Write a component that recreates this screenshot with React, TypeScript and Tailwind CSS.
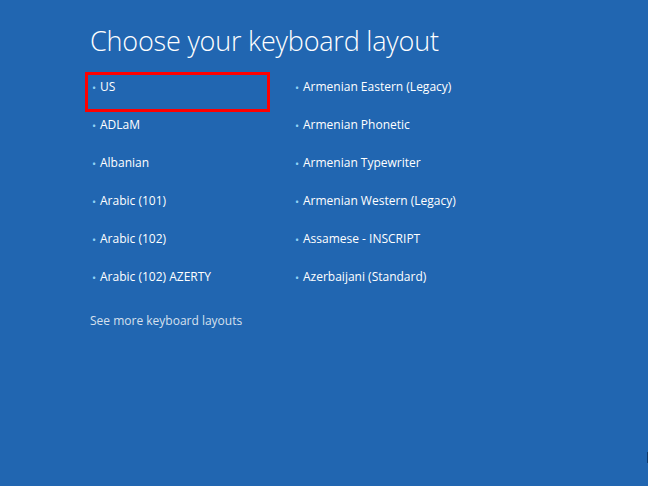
const leftColumn = ['US', 'ADLaM', 'Albanian', 'Arabic (101)', 'Arabic (102)', 'Arabic (102) AZERTY'];
const rightColumn = [
    'Armenian Eastern (Legacy)',
    'Armenian Phonetic',
    'Armenian Typewriter',
    'Armenian Western (Legacy)',
    'Assamese - INSCRIPT',
    'Azerbaijani (Standard)',
];

function LayoutItem({ label, selected }: { label: string; selected?: boolean }) {
    return (
        <div className="relative h-[38px] flex items-center">
            {selected && (
                <div className="absolute left-[-5px] top-[4px] w-[185px] h-[40px] border-[3px] border-[#ff0000]" />
            )}
            <span className="w-[10px] pl-[2px] text-[#8fd3f5] text-[11px] leading-none">•</span>
            <span className="text-[12px] text-white">{label}</span>
        </div>
    );
}

export default function App() {
    return (
        <div
            className="w-[648px] h-[486px] bg-[#2166b1] overflow-hidden relative"
            style={{ fontFamily: '"Open Sans", "Noto Sans", sans-serif' }}
        >
            <div className="pl-[90px] pt-[24px]">
                <h1 className="text-[27px] font-light text-white leading-[34px] tracking-[-0.2px]">
                    Choose your keyboard layout
                </h1>

                {/* ── Layout list ───────────────────── */}
                <div className="flex mt-[10px]">
                    <div className="w-[203px]">
                        {leftColumn.map((l, i) => (
                            <LayoutItem key={l} label={l} selected={i === 0} />
                        ))}
                    </div>
                    <div>
                        {rightColumn.map((l) => (
                            <LayoutItem key={l} label={l} />
                        ))}
                    </div>
                </div>

                <div className="mt-[6px] h-[38px] flex items-center text-[12px] text-[#d6e0ee]">
                    See more keyboard layouts
                </div>
            </div>

            <div className="absolute right-0 top-[452px] w-[1px] h-[11px] bg-[#0d3a6e]" />
        </div>
    );
}
